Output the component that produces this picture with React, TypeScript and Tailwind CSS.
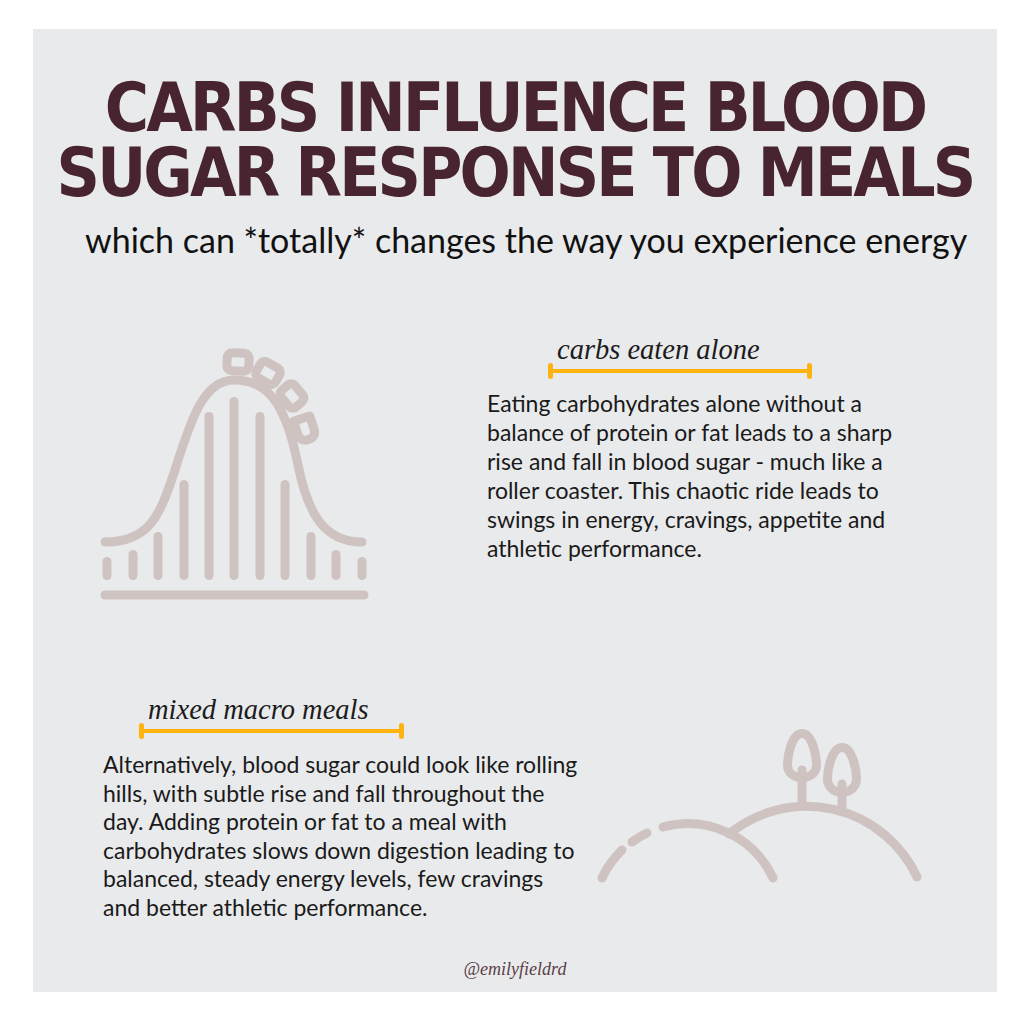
const ICON = '#cfc3c2';

const RollerCoaster = () => {
  const bars: [number, number][] = [
    [107, 557], [133, 550], [158, 532], [184, 480], [209, 412], [234, 397],
    [260, 412], [285, 480], [311, 532], [336, 550], [362, 557],
  ];
  return (
    <svg width="275" height="267" viewBox="98 335 275 267" fill="none" stroke={ICON} strokeWidth="9" strokeLinecap="round" strokeLinejoin="round">
      <line x1="105" y1="595" x2="364" y2="595" />
      <path d="M105,542 C150,542 160,515 175,470 C192,415 205,380 234,380 C266,380 285,400 298,465 C308,515 325,542 362,542" />
      {bars.map(([x, top]) => (
        <line key={x} x1={x} y1={top + 4.5} x2={x} y2={575.5} />
      ))}
      {/* cars */}
      <rect x="-11" y="-9" width="22" height="18" rx="5" transform="translate(238 362) rotate(3)" />
      <rect x="-11" y="-9" width="22" height="18" rx="5" transform="translate(268 373) rotate(30)" />
      <rect x="-11" y="-9" width="22" height="18" rx="5" transform="translate(292 396) rotate(50)" />
      <path d="M-11,-8.5 L3,-8.5 Q11,-8.5 11,0 Q11,8.5 3,8.5 L-11,8.5 Z" transform="translate(305 429) rotate(72)" />
    </svg>
  );
};

const Hills = () => (
  <svg width="330" height="190" viewBox="595 695 330 190" fill="none" stroke={ICON} strokeWidth="9" strokeLinecap="round" strokeLinejoin="round">
    <path d="M602,878 A94,94 0 0 1 622,850" />
    <path d="M632,842 A94,94 0 0 1 647,833" />
    <path d="M663,827 A94,94 0 0 1 773,878" />
    <path d="M729,834 A122,122 0 0 1 917,877" />
    <path d="M802,733.5 C792,733.5 787.5,755 787.5,765 C787.5,773 794,777.5 802,777.5 C810,777.5 816.5,773 816.5,765 C816.5,755 812,733.5 802,733.5 Z" />
    <line x1="802" y1="770" x2="802" y2="806" />
    <path d="M842,747.5 C832,747.5 827.5,769 827.5,779 C827.5,787 834,792.5 842,792.5 C850,792.5 856.5,787 856.5,779 C856.5,769 852,747.5 842,747.5 Z" />
    <line x1="842" y1="784" x2="842" y2="811" />
  </svg>
);

const Bracket = ({ width }: { width: number }) => (
  <div className="flex items-center h-[16px]" style={{ width }}>
    <div className="w-[5px] h-[16px] rounded-full bg-[#ffb30f]" />
    <div className="flex-1 h-[4px] bg-[#ffb30f]" />
    <div className="w-[5px] h-[16px] rounded-full bg-[#ffb30f]" />
  </div>
);

const Label = ({ text }: { text: string }) => (
  <div className="font-['Liberation_Serif',serif] italic text-[28.5px] leading-[30px] text-[#1c1c1c] whitespace-nowrap">
    {text}
  </div>
);

const Body = ({ lines, leading }: { lines: string[]; leading: string }) => (
  <div className={`font-['Lato',sans-serif] text-[23px] text-[#1a1a1a] ${leading}`}>
    {lines.map((l) => (
      <div key={l} className="whitespace-nowrap">{l}</div>
    ))}
  </div>
);

export default function App() {
  return (
    <div className="w-[1024px] h-[1024px] bg-white pt-[29px] pl-[33px]">
      <div className="w-[964px] h-[963px] bg-[#e9eaec] flex flex-col">
        {/* heading */}
        <h1 className="pt-[47px] text-center font-['Liberation_Sans_Narrow','DejaVu_Sans_Condensed',sans-serif] font-bold text-[67px] leading-[65px] tracking-[-2.8px] text-[#47242f] uppercase whitespace-nowrap">
          <div>Carbs influence blood</div>
          <div>Sugar response to meals</div>
        </h1>
        <p className="mt-[14px] pl-[52px] font-['Lato',sans-serif] text-[34px] leading-[40px] text-[#111111] whitespace-nowrap">
          which can *totally* changes the way you experience energy
        </p>

        {/* carbs eaten alone */}
        <div className="mt-[75px] flex items-start pl-[65px]">
          <RollerCoaster />
          <div className="ml-[114px] flex flex-col">
            <div className="pl-[70px]">
              <Label text="carbs eaten alone" />
            </div>
            <div className="ml-[61px] -mt-[2px]">
              <Bracket width={264} />
            </div>
            <div className="mt-[10px]">
              <Body
                leading="leading-[29px]"
                lines={[
                  'Eating carbohydrates alone without a',
                  'balance of protein or fat leads to a sharp',
                  'rise and fall in blood sugar - much like a',
                  'roller coaster. This chaotic ride leads to',
                  'swings in energy, cravings, appetite and',
                  'athletic performance.',
                ]}
              />
            </div>
          </div>
        </div>

        {/* mixed macro meals */}
        <div className="mt-[93px] flex items-start">
          <div className="w-[562px] pl-[70px] flex flex-col">
            <div className="pl-[45px]">
              <Label text="mixed macro meals" />
            </div>
            <div className="ml-[36px] -mt-[2px]">
              <Bracket width={265} />
            </div>
            <div className="mt-[11px]">
              <Body
                leading="leading-[28.5px]"
                lines={[
                  'Alternatively, blood sugar could look like rolling',
                  'hills, with subtle rise and fall throughout the',
                  'day. Adding protein or fat to a meal with',
                  'carbohydrates slows down digestion leading to',
                  'balanced, steady energy levels, few cravings',
                  'and better athletic performance.',
                ]}
              />
            </div>
          </div>
          <Hills />
        </div>

        <div className="mt-auto pb-[13px] text-center font-['Liberation_Serif',serif] italic text-[18px] leading-[20px] text-[#5a4048]">
          @emilyfieldrd
        </div>
      </div>
    </div>
  );
}
